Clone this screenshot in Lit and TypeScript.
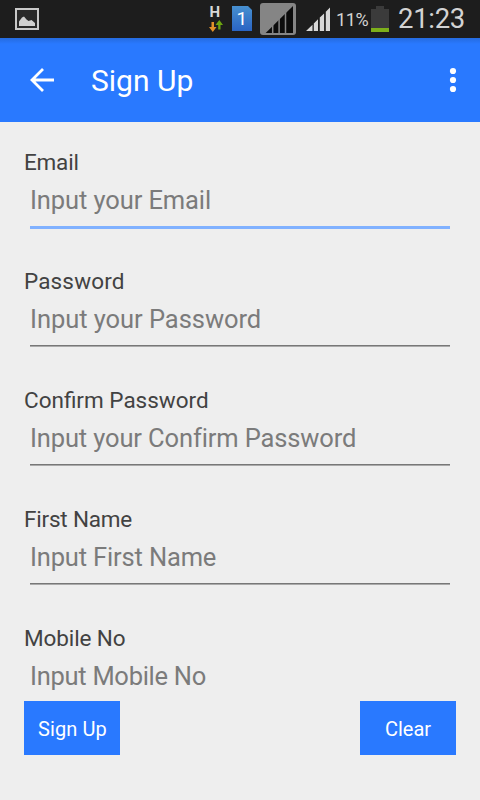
import {LitElement, html, css} from "lit";

interface Field {
  label: string;
  hint: string;
  labelSpacing: number;
  hintSpacing: number;
}

const fields: Field[] = [
  {label: "Email", hint: "Input your Email", labelSpacing: -0.2, hintSpacing: -0.1},
  {label: "Password", hint: "Input your Password", labelSpacing: 0.15, hintSpacing: -0.05},
  {label: "Confirm Password", hint: "Input your Confirm Password", labelSpacing: 0, hintSpacing: -0.13},
  {label: "First Name", hint: "Input First Name", labelSpacing: -0.2, hintSpacing: -0.16},
  {label: "Mobile No", hint: "Input Mobile No", labelSpacing: -0.1, hintSpacing: -0.28},
];

class AppRoot extends LitElement {
  static styles = css`
    :host{display:flex;flex-direction:column;height:800px;width:480px;background:#eee;font-family:Roboto,sans-serif;overflow:hidden}
    svg{display:block;flex:none}
    .status{height:38px;background:#1d1d1d;flex:none;display:flex;align-items:flex-start;padding:0 15px 0 15px;color:#d3d3d3}
    .spacer{flex:1}
    .net{margin-right:9px}
    .net text{font:700 15px Roboto,sans-serif;fill:#d8d8d8}
    .sim{margin-right:8px}
    .sim text{font:400 19px Roboto,sans-serif;fill:#fff}
    .roam{margin-right:10px}
    .signal{margin-right:5px}
    .percent{width:32px;margin-right:3px;font-size:18px;line-height:22px;padding-top:9px;letter-spacing:-.35px;white-space:nowrap}
    .battery{margin-right:9px}
    .clock{width:67px;font-size:27.5px;line-height:32px;padding-top:3px;letter-spacing:-.3px;white-space:nowrap}
    .bar{height:84px;flex:none;background:linear-gradient(#256bdf 0,#2979ff 6px);color:#fff;display:flex;align-items:center}
    .bar .back{margin-left:29px}
    .bar h1{font-size:30px;font-weight:400;margin:2px 0 0 36px;flex:1;line-height:36px}
    .bar .more{margin-right:22px}
    .form{height:579px;flex:none;overflow:hidden;padding:27px 24px 0;box-sizing:border-box}
    .field{height:119px}
    label{display:block;font-size:22.5px;line-height:26px;color:#424242;white-space:nowrap}
    .hint{margin:0 6px;padding-top:10px;height:41px;font-size:25.5px;line-height:30px;color:#7b7b7b;border-bottom:1px solid #777;box-shadow:0 1px #aaa;white-space:nowrap}
    .field:first-child .hint{border-bottom:3px solid #80b1ff;box-shadow:none}
    .actions{display:flex;justify-content:space-between;padding:0 24px}
    button{width:96px;height:54px;border:0;padding:2px 0 0;background:#2979ff;color:#fff;font:20px/24px Roboto,sans-serif}
    button:first-child{padding-left:1px;letter-spacing:.1px}
  `;

  render(){
    return html`
      <div class="status">
        <svg width="24" height="38" viewBox="0 0 24 38"><path d="M1 9h22v20H1z" fill="#292929" stroke="#c9c9c9" stroke-width="2"/><path d="M4 26v-4.500l3-4 2-1 2.500 3 2 1.500 3-1 3.500 3v3z" fill="#d0d0d0"/></svg>
        <span class="spacer"></span>
        <svg class="net" width="14" height="38" viewBox="0 0 14 38"><text x=".5" y="17">H</text><path d="M2.500 22h2.500v5h2.500l-3.700 5-3.800-5h2.500z" fill="#e39129"/><path d="M9.200 29.500v-4.500H6.500l3.800-5 3.700 5h-2.500v4.500z" fill="#6ca510"/></svg>
        <svg class="sim" width="20" height="38" viewBox="0 0 20 38"><defs><linearGradient id="card" x2="0" y2="1"><stop stop-color="#4790d0"/><stop offset="1" stop-color="#2a64c3"/></linearGradient></defs><path d="M0 6h16l4 4v21H0z" fill="url(#card)"/><text x="4.500" y="25">1</text></svg>
        <svg class="roam" width="36" height="38" viewBox="0 0 36 38"><rect y="3" width="36" height="32" rx="3" fill="#858585"/><path d="M5.700 33L33 6v27z" fill="#0c0c0c"/><path d="M12.700 25v8m6.400-15v15m6.400-22v22" stroke="#858585" stroke-width="1.500"/></svg>
        <svg class="signal" width="25" height="38" viewBox="0 0 25 38"><path d="M0 31l6.500-6.200V31zM7.800 23.500l4.200-4.200V31H7.800zM13.800 17.600l4.300-4.200V31h-4.300zM19.800 11.700l4.200-4.200V31h-4.200z" fill="#d8d8d8"/></svg>
        <span class="percent">11%</span>
        <svg class="battery" width="18" height="38" viewBox="0 0 18 38"><path d="M0 9h5V6h8v3h5v19H0z" fill="#3b3b3b"/><path d="M0 28h18v4H0z" fill="#7daf1b"/></svg>
        <span class="clock">21:23</span>
      </div>
      <div class="bar">
        <svg class="back" width="26" height="26" viewBox="0 0 26 26"><path d="M25 13H3M14 2L3 13l11 11" fill="none" stroke="#fff" stroke-width="2.800"/></svg>
        <h1>Sign Up</h1>
        <svg class="more" width="10" height="26" viewBox="0 0 10 26" fill="#fff"><circle cx="5" cy="4" r="3.100"/><circle cx="5" cy="13" r="3.100"/><circle cx="5" cy="22" r="3.100"/></svg>
      </div>
      <div class="form">${fields.map(f => html`
        <div class="field">
          <label style="letter-spacing:${f.labelSpacing}px">${f.label}</label>
          <div class="hint" style="letter-spacing:${f.hintSpacing}px">${f.hint}</div>
        </div>`)}
      </div>
      <div class="actions"><button>Sign Up</button><button>Clear</button></div>`;
  }
}
customElements.define("app-root", AppRoot);
